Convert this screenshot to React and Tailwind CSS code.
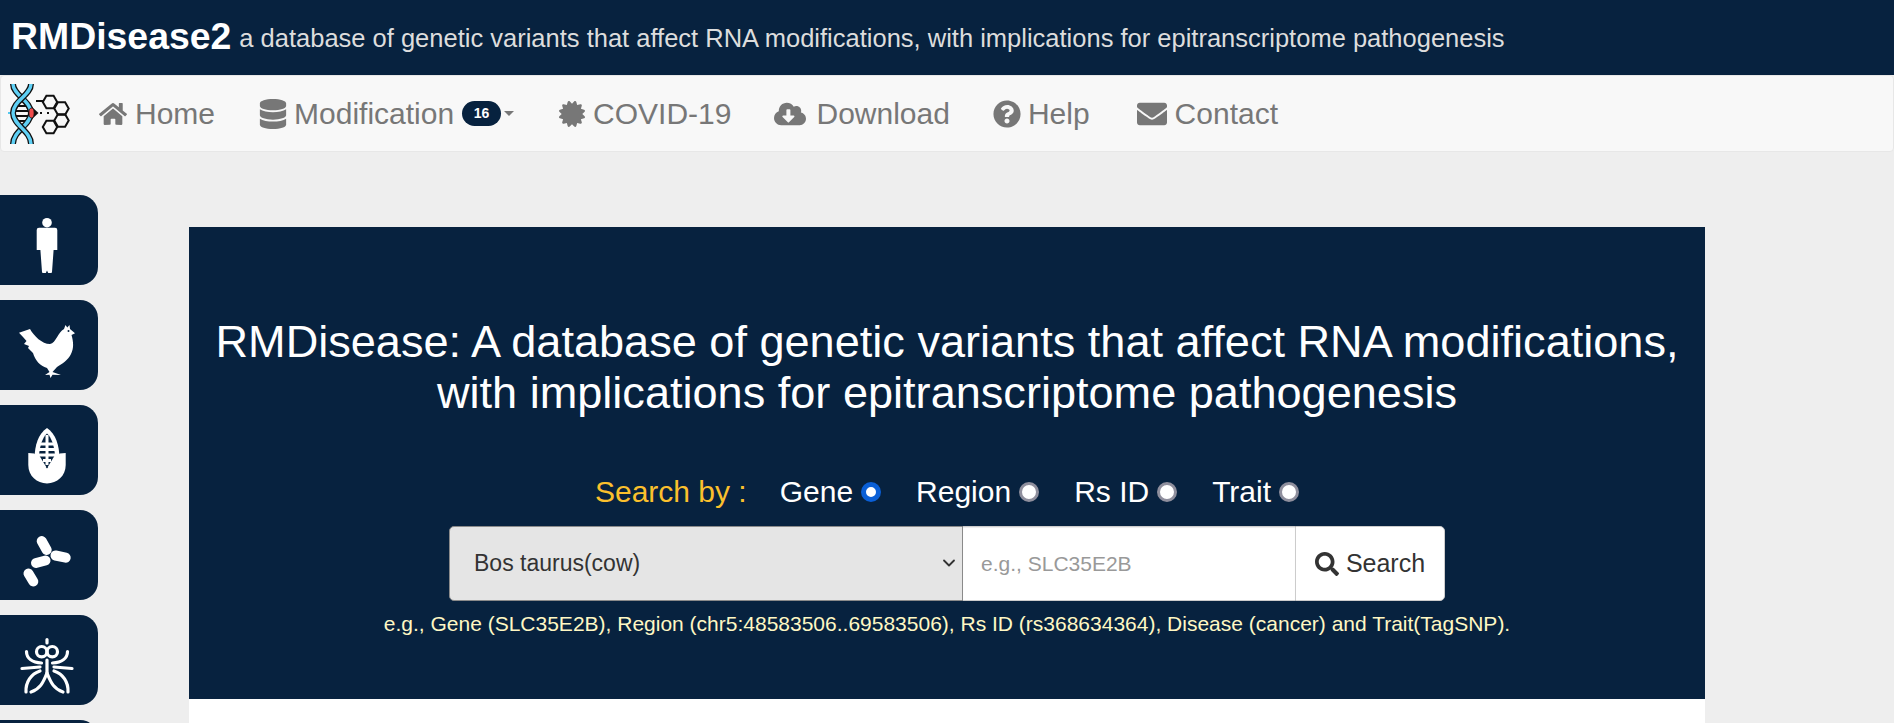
import { FaSearch, FaDatabase, FaCertificate, FaCloudDownloadAlt, FaQuestionCircle, FaEnvelope, FaHome } from 'react-icons/fa'
import { ChevronDown } from 'lucide-react'

const hex = (cx, cy, r = 7.2) =>
  [0, 60, 120, 180, 240, 300]
    .map((a) => `${(cx + r * Math.cos((a * Math.PI) / 180)).toFixed(1)},${(cy + r * Math.sin((a * Math.PI) / 180)).toFixed(1)}`)
    .join(' ')

function Logo() {
  const a = 'M8 5 C8 16 26 22 26 34 C26 46 8 52 8 65'
  const b = 'M26 5 C26 16 8 22 8 34 C8 46 26 52 26 65'
  return (
    <svg viewBox="0 0 70 70" className="w-[70px] h-[70px] shrink-0">
      <g fill="none" strokeLinecap="butt">
        <path d="M12 27h10M9 32h16M9 37h16M12 42h10" stroke="#111" strokeWidth="1.8" />
        <path d="M3 34h4" stroke="#55c8ee" strokeWidth="2" />
        <path d={a} stroke="#111" strokeWidth="6" />
        <path d={a} stroke="#5fd0f5" strokeWidth="3.4" />
        <path d={b} stroke="#111" strokeWidth="6" />
        <path d={b} stroke="#5fd0f5" strokeWidth="3.4" />
        <path d="M31 22h7M35 34h2M42 34h2" stroke="#111" strokeWidth="1.9" />
        <polygon points={hex(45, 23)} stroke="#111" strokeWidth="2" />
        <polygon points={hex(56.5, 29.5)} stroke="#111" strokeWidth="2" />
        <polygon points={hex(56.5, 41.5)} stroke="#111" strokeWidth="2" />
        <polygon points={hex(45, 48)} stroke="#111" strokeWidth="2" />
      </g>
      <path d="M27 28 L33.5 34 L27 40 Z" fill="#111" />
      <ellipse cx="26.5" cy="34" rx="2.6" ry="5" fill="#ef4b4b" stroke="#111" strokeWidth="0.8" />
    </svg>
  )
}

function Person() {
  return (
    <svg viewBox="0 0 98 90" className="w-full h-full">
      <circle cx="47" cy="27.7" r="4.8" fill="#fff" />
      <path d="M39 32.7 H55 Q57.3 32.7 57.3 35 V55 H53.6 L52 77 Q52 78 51 78 H48.2 L47 75.5 L45.8 78 H43 Q42 78 42 77 L40.4 55 H36.7 V35 Q36.7 32.7 39 32.7 Z" fill="#fff" />
    </svg>
  )
}

function Hen() {
  return (
    <svg viewBox="0 0 98 90" className="w-full h-full">
      <path d="M19 32.7 L30 29 C34 36 42 44 50 44 C56 43 58 32 64 29 L65.5 25 L67.3 27.5 L69.5 25 L70 29 L75 33.3 L71.5 35 C73.5 42 74 48 71 54 C68 60 62 64 57 67 L52.5 72 L61 75 L52.5 74.8 L50.5 78 L49.5 74.8 L45 75 L49.5 72 L47 68 C40 66 35 60 33 53 L28 48 L29 46 L24 44 L26.5 41 L23 37 Z" fill="#fff" />
      <circle cx="68.5" cy="31" r="1" fill="#07223f" />
    </svg>
  )
}

function Corn() {
  return (
    <svg viewBox="0 0 98 90" className="w-full h-full">
      <path d="M47 23 C38 29 35 40 34.3 54 L34.3 62 H59.7 V54 C59 40 56 29 47 23 Z" fill="#fff" />
      <path d="M47 28.5 C42 33 40 41 39 50 L47 63.3 L55 50 C54 41 52 33 47 28.5 Z" fill="#07223f" />
      <path d="M47 30 V60" stroke="#fff" strokeWidth="3" fill="none" />
      <path d="M39 39 H55 M39 44.5 H55 M39 50 H55 M43 55.5 H51" stroke="#fff" strokeWidth="3" fill="none" />
      <path d="M28.3 48 L34.3 48.5 L47 63.5 L59.7 48.5 L65.7 48 V60 C65.7 71 57 78.4 47 78.4 C37 78.4 28.3 71 28.3 60 Z" fill="#fff" />
    </svg>
  )
}

function Bacteria() {
  return (
    <svg viewBox="0 0 98 90" className="w-full h-full">
      <g stroke="#fff" strokeWidth="10" strokeLinecap="round" fill="none">
        <path d="M41.7 31 L46.7 40" />
        <path d="M55.5 45.5 L65.7 47.7" />
        <path d="M36 53 L45.5 50.5" />
        <path d="M28.5 63.5 L33.3 71.5" />
      </g>
    </svg>
  )
}

function Fly() {
  return (
    <svg viewBox="0 0 98 90" className="w-full h-full">
      <g stroke="#fff" strokeWidth="3.2" strokeLinecap="round" fill="none">
        <circle cx="41.7" cy="36.7" r="5.2" />
        <circle cx="52.3" cy="36.7" r="5.2" />
        <path d="M47 24.5 V28 M47 45 V58" />
        <path d="M26.5 36.5 C26.5 43 32 47.5 41.5 48" />
        <path d="M67.5 36.5 C67.5 43 62 47.5 52.5 48" />
        <path d="M22 53.5 L40 52 M72 53.5 L54 52" />
        <path d="M40 56 C31 59 25.5 67 26 77 M54 56 C63 59 68.5 67 68 77" />
        <path d="M47 58 C43 68 40 74 31 77 M47 58 C51 68 54 74 63 77" />
      </g>
    </svg>
  )
}

const sideItems = [Person, Hen, Corn, Bacteria, Fly, null]

const radios = [
  { label: 'Gene', checked: true },
  { label: 'Region' },
  { label: 'Rs ID' },
  { label: 'Trait' },
]

export default function App() {
  return (
    <div className="h-screen overflow-hidden bg-[#eeeeee] text-white" style={{ fontFamily: '"Liberation Sans", Arial, sans-serif' }}>
      {/* Title bar */}
      <header className="h-[75px] bg-[#07223f] flex items-center pl-[11px] pb-[2px]">
        <h1 className="text-[37.4px] font-bold leading-none">RMDisease2</h1>
        <span className="ml-[8px] mt-[5px] text-[25.5px] leading-none text-[#dddddd]">
          a database of genetic variants that affect RNA modifications, with implications for epitranscriptome pathogenesis
        </span>
      </header>

      {/* Nav */}
      <nav className="h-[77px] bg-[#f8f8f8] border border-[#e7e7e7] rounded-[4px] flex items-center pl-[4px] text-[#777777] text-[30px]">
        <Logo />
        <ul className="flex items-center ml-[24px] gap-[46px]">
          <li className="flex items-center gap-[8px]"><FaHome size={28} />Home</li>
          <li className="flex items-center gap-[6px] ml-[-3px]">
            <FaDatabase size={30} />
            <span className="mr-[2px]">Modification</span>
            <span className="w-[39px] h-[25px] rounded-full bg-[#07223f] text-white text-[14px] font-bold flex items-center justify-center">16</span>
            <span className="ml-[-3px] border-t-[5px] border-x-[5px] border-t-[#777777] border-x-transparent"></span>
          </li>
          <li className="flex items-center gap-[8px] ml-[-1px]"><FaCertificate size={26} />COVID-19</li>
          <li className="flex items-center gap-[10px] ml-[-3px]"><FaCloudDownloadAlt size={32} />Download</li>
          <li className="flex items-center gap-[7px] ml-[-3px]"><FaQuestionCircle size={28} />Help</li>
          <li className="flex items-center gap-[8px] ml-[1px]"><FaEnvelope size={30} />Contact</li>
        </ul>
      </nav>

      <div className="flex">
        {/* Species tabs */}
        <aside className="w-[189px] shrink-0 pt-[43px] flex flex-col gap-[15px]">
          {sideItems.map((Icon, i) => (
            <div key={i} className="w-[98px] h-[90px] shrink-0 bg-[#07223f] rounded-r-[18px]">
              {Icon && <Icon />}
            </div>
          ))}
        </aside>

        {/* Main */}
        <main className="w-[1516px] mt-[75px] bg-white h-[600px]">
          <section className="h-[472px] bg-[#07223f] flex flex-col items-center pt-[89px]">
            <h2 className="text-[45.1px] leading-[51px] text-center w-[1500px]">
              RMDisease: A database of genetic variants that affect RNA modifications,
              <br />
              with implications for epitranscriptome pathogenesis
            </h2>
            <div className="mt-[54px] flex items-center text-[30px] leading-[40px]">
              <span className="text-[#fbc02d] mr-[33px]">Search by :</span>
              {radios.map((r) => (
                <label key={r.label} className="flex items-center mr-[35px] last:mr-0">
                  {r.label}
                  <input
                    type="radio"
                    name="by"
                    defaultChecked={r.checked}
                    className="appearance-none ml-[8px] w-[20px] h-[20px] rounded-full bg-white border-[3px] border-[#8f8f9d] checked:border-[5px] checked:border-[#0a5fd6]"
                  />
                </label>
              ))}
            </div>
            <div className="mt-[14px] w-[996px] h-[75px] flex text-[#333333] text-[25px]">
              <div className="relative w-[514px] h-full">
                <select defaultValue="cow" className="appearance-none w-full h-full rounded-l-[5px] bg-[#e5e5e5] border border-[#8a8a8a] pl-[24px] text-[23px] text-[#333333] outline-none">
                  <option value="cow">Bos taurus(cow)</option>
                </select>
                <ChevronDown size={20} strokeWidth={2.2} className="absolute right-[4px] top-[27px] text-[#333333]" />
              </div>
              <input
                placeholder="e.g., SLC35E2B"
                className="flex-1 min-w-0 h-full px-[18px] text-[21px] bg-white border-y border-[#cccccc] shadow-[inset_0_1px_1px_rgba(0,0,0,0.075)] placeholder:text-[#999999] outline-none"
              />
              <button className="w-[150px] h-full border border-[#cccccc] rounded-r-[5px] flex items-center justify-center gap-[7px] text-[#333333] bg-white">
                <FaSearch size={24} />
                Search
              </button>
            </div>
            <p className="mt-[10px] text-[21px] leading-[26px] text-[#fff8c4]">
              e.g., Gene (SLC35E2B), Region (chr5:48583506..69583506), Rs ID (rs368634364), Disease (cancer) and Trait(TagSNP).
            </p>
          </section>
        </main>
      </div>
    </div>
  )
}
